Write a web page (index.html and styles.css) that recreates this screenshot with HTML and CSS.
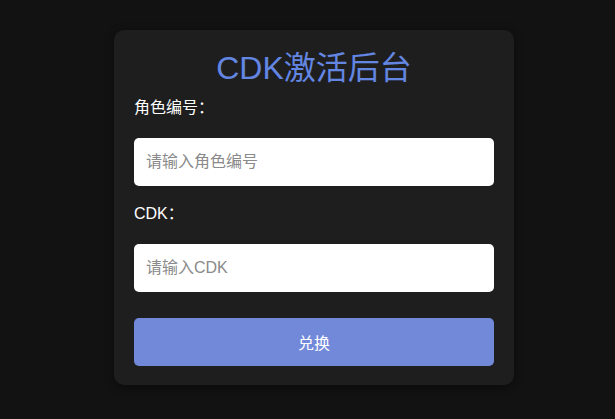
FILE: index.html
```html
<!DOCTYPE html>
<html lang="zh-CN">
<head>
<meta charset="utf-8">
<title>CDK激活后台</title>
<link rel="stylesheet" href="styles.css">
</head>
<body>
  <div class="card">
    <h1 class="title">CDK激活后台</h1>
    <label class="label" for="role">角色编号：</label>
    <input class="field" id="role" type="text" placeholder="请输入角色编号">
    <label class="label label-second" for="cdk">CDK：</label>
    <input class="field" id="cdk" type="text" placeholder="请输入CDK">
    <button class="btn" type="button">兑换</button>
  </div>
</body>
</html>
```
FILE: styles.css
```css
html, body {
  margin: 0;
  background: #121212;
}
body {
  min-height: 100vh;
  box-sizing: border-box;
  padding: 30px 0 0 13px;
  display: flex;
  justify-content: center;
  align-items: flex-start;
  font-family: "Liberation Sans", "Noto Sans CJK SC", sans-serif;
}
.card {
  width: 400px;
  box-sizing: border-box;
  padding: 20px 20px 19px;
  background: #1e1e1e;
  border-radius: 10px;
  box-shadow: 0 2px 10px rgba(0, 0, 0, 0.45);
}
.title {
  margin: 0 0 12px;
  font-size: 32px;
  line-height: 36px;
  font-weight: normal;
  text-align: center;
  color: #6386e2;
}
.label {
  display: block;
  font-size: 16px;
  line-height: 20px;
  color: #ffffff;
  margin-bottom: 20px;
}
.label-second {
  margin-top: 18px;
}
.field {
  display: block;
  width: 100%;
  height: 48px;
  box-sizing: border-box;
  padding: 0 12px;
  border: none;
  border-radius: 5px;
  background: #ffffff;
  font-family: inherit;
  font-size: 16px;
  color: #222;
  outline: none;
}
.field::placeholder {
  color: #8a8a8a;
}
.btn {
  display: block;
  width: 100%;
  height: 48px;
  margin-top: 26px;
  border: none;
  border-radius: 5px;
  background: #7289da;
  color: #ffffff;
  font-family: inherit;
  font-size: 16px;
  cursor: pointer;
}
```
